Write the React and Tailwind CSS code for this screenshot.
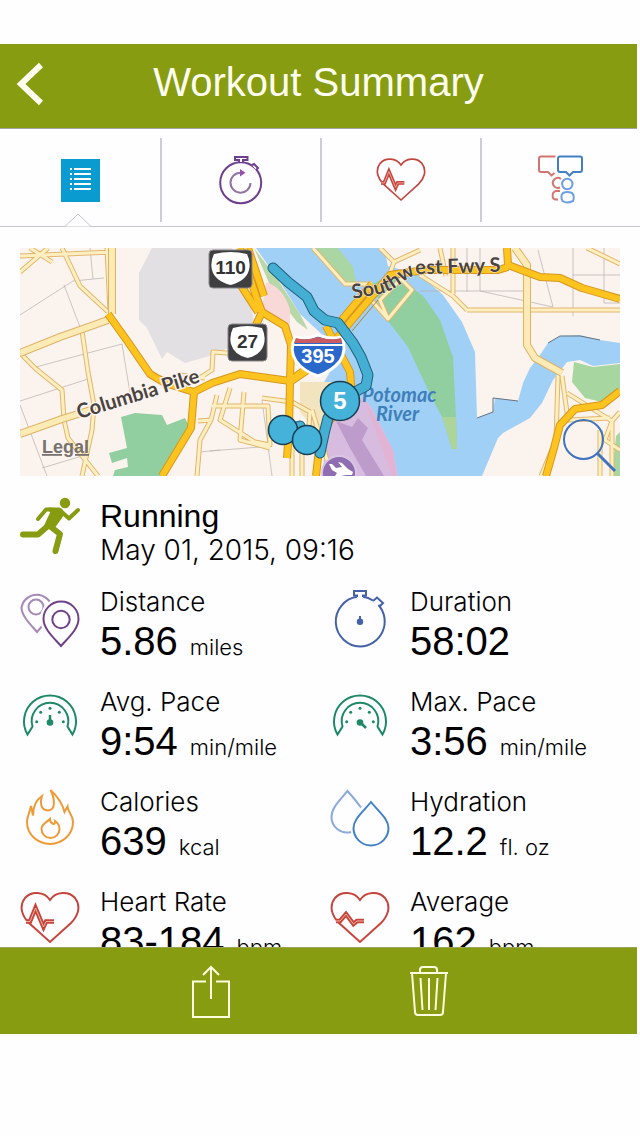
import React from "react";

const roads = {
  thin: [
    "M20 315 L73 281 L104 278 M64 285 L80 327 M90 248 L93 279",
    "M36 367 L88 353 L122 344 L130 393 M20 401 L88 379 M20 405 L47 476 M42 468 L82 456",
    "M210 451 L260 447 M262 400 L272 476 M200 462 V452 L220 450",
    "M467 248 V292 M480 248 V291 L553 307 L538 250 M573 248 V316 M573 275 H620 M604 248 V303 H620 M420 291 H530",
  ],
  minor: [
    "M20 256 L112 252 M20 272 L48 248 M30 248 L52 262",
    "M62 248 L80 286 L108 312 M107 248 L110 312",
    "M82 331 L88 372 L94 405 L92 430 L82 476 M20 353 L36 369 L62 390 L64 420 L68 438 L98 476",
    "M150 376 L190 384 L212 370 L213 352 L240 354 M180 375 L205 378",
    "M217 395 L211 420 L200 440 L197 476 M198 421 L212 420",
    "M212 406 H268 L270 445 L255 442 L220 420 L230 388 M244 392 L240 440 L270 448 M262 398 L292 402 L310 412 L308 440",
    "M313 248 L345 284 L372 284 M373 302 L388 319 L412 290 L400 278 M388 319 L380 300 L400 280",
    "M380 248 L394 262 L386 284 M394 262 L420 250 M420 275 L453 296 L467 310 M453 248 V294 M440 248 L446 276",
    "M292 445 V476 M302 450 V476 M312 410 L330 470",
    "M467 310 H620 M587 248 L620 264",
    "M562 376 L568 420 L610 418 M567 393 L612 421 L605 440 L620 450 M600 476 V430 M612 476 V421 L620 412",
    "M558 376 L556 440 L541 476",
  ],
  wide: [
    "M20 353 L60 337 L108 320 M20 434 L62 419 L94 409",
    "M112 248 L112 314",
    "M515 248 L527 265 V345 L535 358 L562 373",
  ],
  main: [
    "M108 314 L128 342 L150 374 L165 383 L194 392 L212 383 L240 374 L290 381 L310 366",
    "M194 392 L191 428 L162 476",
    "M507 248 L508 265 L540 277 L560 278 L582 288 L620 299",
    "M508 267 L498 270 H425 L390 275 L352 320 L315 365 L290 382",
    "M372 284 L340 322 M240 284 L258 312",
    "M240 248 L256 296 L262 312 L285 326 L291 345 L290 382 L289 430 L287 458",
    "M248 248 L264 296 M262 312 L256 325",
    "M326 326 L350 372 L352 395 L330 420 L320 440 L316 476",
    "M620 391 L602 405 L575 409 L560 425 L554 448 L546 476",
  ],
};

const RoadLayer = ({ paths, casing, fill, width }) => (
  <g fill="none" strokeLinejoin="round">
    <path d={paths.join(" ")} stroke={casing} strokeWidth={width + 2} />
    <path d={paths.join(" ")} stroke={fill} strokeWidth={width} />
  </g>
);

const StateShield = ({ x, y, w, h, label }) => (
  <g>
    <rect x={x} y={y} width={w} height={h} rx="4" fill="#3f3e41" stroke="#88878a" />
    <path
      d={`M${x + 5} ${y + 4} Q${x + w / 2} ${y} ${x + w - 5} ${y + 4} Q${x + w - 1} ${y + 12} ${x + w - 3} ${y + 20} Q${x + w - 6} ${y + 31} ${x + w / 2} ${y + h - 3} Q${x + 6} ${y + 31} ${x + 3} ${y + 20} Q${x + 1} ${y + 12} ${x + 5} ${y + 4} Z`}
      fill="#fff"
    />
    <text
      x={x + w / 2}
      y={y + 24}
      textAnchor="middle"
      fontSize="19"
      className="font-['Liberation_Sans',sans-serif] font-bold"
      fill="#333"
    >
      {label}
    </text>
  </g>
);

const route =
  "M273 268 L288 282 L307 297 L314 311 L325 320 L338 323 L353 343 L361 357 L368 375 L366 386 L353 393 M340 400 L328 418 L324 434 L320 453 M284 430 L300 426 L307 438";

const WorkoutMap = () => (
  <svg viewBox="20 248 600 228" className="block w-full" role="img" aria-label="Route map">
    <rect x="20" y="248" width="600" height="228" fill="#fbf3ee" />
    <path
      d="M152 248 L139 273 V320 L147 328 L162 359 L167 352 L185 363 L213 355 L235 345 L254 322 L250 300 L240 280 L232 248 Z"
      fill="#e2e0e2"
    />
    {/* Water */}
    <path
      d="M256 248 H384 L388 266 L420 275 L443 295 L462 322 L475 352 L477 418 L493 412 L495 398 L518 401 L523 383 L530 368 L540 355 L548 343 L560 336 L580 335 L600 340 L620 343 V363 L593 366 L580 360 L567 362 L553 380 L542 403 L530 418 L503 433 L498 438 L482 476 H397 L392 450 L363 400 L325 415 L316 396 L330 372 L328 340 L300 314 L282 285 Z"
      fill="#a0d0f6"
    />
    <path d="M477 418 L493 412 V398 L518 401 M548 343 L560 336 H580 L600 340" stroke="#65727e" fill="none" />
    {/* Parks */}
    <path
      d="M121 417 L135 413 L162 415 L167 425 L185 418 L191 430 L162 476 H113 L115 470 L128 467 L127 458 L112 463 L109 453 L127 448 Z"
      fill="#91cfa0"
    />
    <path d="M317 248 H338 L353 267 L357 286 L337 278 Z" fill="#a9d6a3" />
    <path
      d="M372 284 L397 273 L413 288 L424 297 L440 320 L453 357 L456 417 L457 449 L452 448 L442 417 L433 400 L420 373 L408 347 L388 321 Z"
      fill="#91cfa0"
    />
    <path d="M442 417 H456 L457 449 H452 Z" fill="#add59a" />
    <path d="M574 362 L593 367 L620 364 V392 L602 402 L585 398 L572 382 Z" fill="#a7d6a1" />
    <path d="M616 436 L620 432 V476 H612 Z" fill="#a7d6a1" />
    <path d="M254 248 L276 277 L300 314 L308 330 L297 322 L272 290 Z" fill="#b9d8aa" />
    <path d="M266 282 Q284 288 290 310 V332 L262 308 Z" fill="#f8d9d7" />
    <path d="M300 382 H332 L335 412 L320 436 L300 412 Z" fill="#f3e4c0" />
    {/* Airport grounds */}
    <path d="M328 425 L363 397 L372 408 L393 450 L398 476 H322 Z" fill="#d8bce0" />
    <path d="M363 397 L393 450 L396 476 H392 L381 445 Z" fill="#e3b3d4" />
    <path d="M336 421 L352 427 L358 418 L368 428 L362 440 L384 476 H366 L350 448 Z" fill="#bd9ccc" />

    <path d={roads.thin.join(" ")} fill="none" stroke="#b6b0ae" strokeWidth="0.7" />
    <RoadLayer paths={roads.minor} casing="#e2b76d" fill="#fdefc1" width={3} />
    <RoadLayer paths={roads.wide} casing="#dfb266" fill="#fdebb5" width={6} />
    <RoadLayer paths={roads.main} casing="#d7961f" fill="#fdc41f" width={6} />
    <path d="M378 300 L352 331" stroke="#a98735" fill="none" />

    {/* Place names */}
    <g className="font-[Lato,sans-serif] font-bold" fontSize="20" fill="#49433f" stroke="#fbf3ee" paintOrder="stroke">
      <text x="79" y="419" transform="rotate(-17 79 419)" strokeWidth="3">
        Columbia Pike
      </text>
      <path id="freeway-label" d="M353 299 L380 294 Q392 291 402 283 Q412 274 424 274 L520 271" fill="none" stroke="none" />
      <text strokeWidth="1">
        <textPath href="#freeway-label">Southwest Fwy S</textPath>
      </text>
    </g>
    <g className="font-[Lato,sans-serif] font-bold italic" fontSize="20" fill="#3f7fb9">
      <text x="362" y="402">Potomac</text>
      <text x="376" y="421">River</text>
    </g>

    {/* Airport badge */}
    <circle cx="339" cy="473" r="17" fill="#8f6db0" stroke="#d9c6e6" strokeWidth="2" />
    <path d="M329 464 L332 464 L336 468 L342 467 L338 462 L342 463 L348 469 L353 472 L352 475 L346 475 L341 476 H335 L337 473 L332 470 Z" fill="#fff" />

    <StateShield x={209} y={250} w={43} h={38} label="110" />
    <StateShield x={228} y={324} w={39} h={37} label="27" />

    {/* Interstate shield */}
    <path
      d="M295 337 Q306 340 318 335 Q331 340 342 337 Q347 350 340 361 Q332 371 318 376 Q303 371 296 361 Q289 350 295 337 Z"
      fill="#2b68cc"
      stroke="#fff"
      strokeWidth="3"
    />
    <path d="M296 338 Q306 341 318 337 Q331 341 341 338 L342 343 H294 Z" fill="#c95c62" />
    <path d="M293 345 H343" stroke="#fff" strokeWidth="2" />
    <text
      x="318"
      y="363"
      textAnchor="middle"
      fontSize="20"
      className="font-['Liberation_Sans',sans-serif] font-bold"
      fill="#fff"
    >
      395
    </text>

    {/* Route */}
    <g fill="none" strokeLinecap="round" strokeLinejoin="round">
      <path d={route} stroke="#1f5f7a" strokeWidth="11" />
      <path d={route} stroke="#45aed3" strokeWidth="9" />
    </g>
    <g fill="#45b2da" stroke="#173f52" strokeWidth="1.5">
      <circle cx="283" cy="430" r="14.5" />
      <circle cx="307" cy="440" r="14.5" />
      <circle cx="340" cy="401" r="19.5" />
    </g>
    <text
      x="340"
      y="409"
      textAnchor="middle"
      fontSize="24"
      className="font-['Liberation_Sans',sans-serif] font-bold"
      fill="#fff"
    >
      5
    </text>

    <a href="#legal">
      <text
        x="42"
        y="453"
        fontSize="18"
        className="font-['Liberation_Sans',sans-serif] font-bold underline"
        fill="#77716d"
      >
        Legal
      </text>
    </a>
    <g fill="none" stroke="#3f73c0">
      <circle cx="583.500" cy="439.500" r="19.500" strokeWidth="2" />
      <path d="M597 453 L615 471" strokeWidth="3" />
    </g>
  </svg>
);

const Icon = ({ children, color }) => (
  <svg viewBox="0 0 60 60" className="size-[60px] shrink-0" fill="none" stroke={color} strokeWidth="2" aria-hidden="true">
    {children}
  </svg>
);

const RunnerIcon = () => (
  <Icon color="#879c10">
    <circle cx="45" cy="7" r="5.2" fill="#879c10" stroke="none" />
    <g strokeLinecap="round" strokeLinejoin="round">
      <path d="M18 23 L26 13.500 H39 L49 22.500 L58 14" strokeWidth="4" />
      <path d="M29 13 L41 14 L43 18 L33 32 L26 29 L32 16 Z" fill="#879c10" strokeWidth="3" />
      <path d="M29 29 L18 38.500 H3" strokeWidth="6" />
      <path d="M31 31 L40 38 L35.500 55" strokeWidth="6" />
    </g>
  </Icon>
);

const PinsIcon = () => (
  <Icon color="#6f4288">
    <g stroke="#a58ab5">
      <path d="M17 44 C11 37 1.500 28 1.500 19.500 A15.500 15.500 0 0 1 32 19.500 C32 28 23 37 17 44 Z" />
      <circle cx="16" cy="19" r="7.500" />
    </g>
    <path
      d="M41 58 C34 50 23.500 41 23.500 31 A17.500 17.500 0 0 1 58.500 31 C58.500 41 48 50 41 58 Z"
      fill="#fefdff"
      stroke="#fefdff"
      strokeWidth="7"
    />
    <path d="M41 58 C34 50 23.500 41 23.500 31 A17.500 17.500 0 0 1 58.500 31 C58.500 41 48 50 41 58 Z" />
    <circle cx="41" cy="31.500" r="8.700" />
  </Icon>
);

const StopwatchIcon = () => (
  <Icon color="#4561a8">
    <path d="M27 8.800 A25 25 0 0 0 30 58.500 A25 25 0 0 0 48.500 17 M33 8.800 A25 25 0 0 1 43 12.500" />
    <path d="M27 9 V7.500 H24 V3 H36 V7.500 H33 V9 M43 13 L47 9.500 L53 15 L49.500 18.500" />
    <circle cx="30" cy="33.700" r="3.200" fill="#4561a8" stroke="none" />
    <path d="M30 33 V28" />
  </Icon>
);

const GaugeIcon = ({ needle }) => (
  <Icon color="#1d8a65">
    <path d="M7.500 46.500 A26 26 0 1 1 52.500 46.500 L47.500 38.500 A18.300 18.300 0 1 0 12.500 38.500 Z" />
    <g fill="#1d8a65" stroke="none">
      <circle cx="16.700" cy="33.700" r="1.500" />
      <circle cx="20.700" cy="24.300" r="1.500" />
      <circle cx="30" cy="20.300" r="1.500" />
      <circle cx="39.300" cy="24.300" r="1.500" />
      <circle cx="43.300" cy="33.700" r="1.500" />
      <circle cx="30" cy="34.500" r="3.300" />
    </g>
    <path d={needle} strokeWidth="2.500" />
  </Icon>
);

const FlameIcon = () => (
  <Icon color="#ee9b36">
    <path d="M30.500 2 C36 7 42 14 44.500 24 L47.500 18.500 C48 24 53 27 53 34 A23 22 0 0 1 7 34 C7 28 10 24 11 18 L13 27.500 C13 19 16 12 22 8 C20 14 20 22 28 22.500 C36 22 35 11 30.500 2 Z" />
    <path d="M30 31 C30 36 36 38 35 33 C38 35 39.500 38 39.500 41 A9 9 0 0 1 21.500 41 C21.500 36 26 35 30 31 Z" />
  </Icon>
);

const DropsIcon = () => (
  <Icon color="#4381c7">
    <path d="M31 19.500 C27 14 22 8 17.500 3 C9 13 1.500 20 1.500 29 A15.500 15.500 0 0 0 21 44" stroke="#8aaade" />
    <path d="M41 14 C49 24 58.500 31 58.500 40 A17.500 17.500 0 0 1 23.500 40 C23.500 31 33 24 41 14 Z" />
  </Icon>
);

const HeartShape = ({ pulse }) => (
  <>
    <path d="M30 12 C24 3 11 3 5 10 C-2 19 3 29 9 35 L30 54 L51 35 C57 29 62 19 55 10 C49 3 36 3 30 12 Z" />
    <path d={pulse} strokeWidth="4.500" />
    <path d={pulse} stroke="#f6b3a4" strokeWidth="1" />
  </>
);

const highPulse = "M6 33.500 H10 L15.500 20 L23.500 39 L26 33.500 H34";
const lowPulse = "M6 33 H10 L16 26 L23.500 36 L27 33 H34";

const HeartIcon = ({ pulse }) => (
  <Icon color="#c5453b">
    <HeartShape pulse={pulse} />
  </Icon>
);

const ListTabIcon = () => (
  <svg viewBox="0 0 39 43" className="h-[43px] w-[39px]" aria-hidden="true">
    <rect width="39" height="43" fill="#0a9bd0" />
    <path
      d="M9 10 H11 M9 15 H11 M9 20 H11 M9 25 H11 M9 30 H11 M13 10 H30 M13 15 H30 M13 20 H30 M13 25 H30 M13 30 H30"
      stroke="#fff"
      strokeWidth="2"
    />
  </svg>
);

const LapTabIcon = () => (
  <svg viewBox="216 154 50 54" className="h-[54px] w-[50px]" fill="none" stroke="#6d3f8c" strokeWidth="2" aria-hidden="true">
    <circle cx="240.700" cy="183.700" r="20.500" />
    <path d="M239 163 V161 H235 V158 H247.500 V161 H243 V163 M252 166 L254 165 L258 169 L256 171" fill="#fff" />
    <path d="M250.500 184 A10 10 0 1 1 240.500 173.700" stroke="#8f74a0" />
    <path d="M240 170 L245.500 173.700 L240 177.500 Z" fill="#9550ae" stroke="none" />
  </svg>
);

const HeartTabIcon = () => (
  <svg viewBox="0 0 60 60" className="size-[50px]" fill="none" stroke="#c2463d" strokeWidth="2" aria-hidden="true">
    <HeartShape pulse={highPulse} />
  </svg>
);

const SocialTabIcon = () => (
  <svg viewBox="536 154 50 54" className="h-[54px] w-[50px]" fill="none" strokeWidth="2" aria-hidden="true">
    <g stroke="#d3756e">
      <path d="M555.500 157.500 H541 Q539 157.500 539 159.500 V171 Q539 173 541 173 H548 L551.500 176.500 L554.500 174" />
      <path d="M561 180 A5 5 0 1 0 560 188.500 M560 192 H556 Q552 193 552.700 198 Q553 201 558 200.500" />
    </g>
    <path
      d="M560 157.500 H580 Q582 157.500 582 159.500 V171 Q582 173 580 173 H573 L569.500 176.500 L566 173 H560 Q558 173 558 171 V159.500 Q558 157.500 560 157.500 Z"
      stroke="#4380c2"
    />
    <g stroke="#6f9fe2">
      <circle cx="567.300" cy="185" r="5.200" />
      <path d="M563 194 Q567 192 572 194 Q575 197 573 202 Q567 205 562.500 202 Q560 197 563 194 Z" />
    </g>
  </svg>
);

const tabs = [
  { label: "Summary", icon: <ListTabIcon /> },
  { label: "Laps", icon: <LapTabIcon /> },
  { label: "Heart rate", icon: <HeartTabIcon /> },
  { label: "Social", icon: <SocialTabIcon /> },
];

const stats = [
  { label: "Distance", value: "5.86", unit: "miles", icon: <PinsIcon /> },
  { label: "Duration", value: "58:02", unit: "", icon: <StopwatchIcon /> },
  { label: "Avg. Pace", value: "9:54", unit: "min/mile", icon: <GaugeIcon needle="M30 34 V27" /> },
  { label: "Max. Pace", value: "3:56", unit: "min/mile", icon: <GaugeIcon needle="M30 34 L36 40" /> },
  { label: "Calories", value: "639", unit: "kcal", icon: <FlameIcon /> },
  { label: "Hydration", value: "12.2", unit: "fl. oz", icon: <DropsIcon /> },
  { label: "Heart Rate", value: "83-184", unit: "bpm", icon: <HeartIcon pulse={highPulse} /> },
  { label: "Average", value: "162", unit: "bpm", icon: <HeartIcon pulse={lowPulse} /> },
];

const App = () => {
  return (
    <div className="flex h-screen flex-col bg-[#fefdff] pt-11 pb-[102px] font-[Inter,'Liberation_Sans',sans-serif] text-black">
      {/* Header */}
      <header className="relative mr-[3px] flex h-[85px] shrink-0 items-center justify-center border-b border-[#a5a5a0] bg-[#879c10] pb-2">
        <button type="button" aria-label="Back" className="absolute left-4 top-[18px]">
          <svg viewBox="0 0 28 44" className="h-11 w-7" fill="none" stroke="#fffff0" strokeWidth="6" aria-hidden="true">
            <path d="M25 3 L5 22 L25 41" />
          </svg>
        </button>
        <h1 className="font-['Liberation_Sans',sans-serif] text-[40px] text-[#fffff0]">Workout Summary</h1>
      </header>

      {/* Tabs */}
      <nav className="relative grid h-[98px] shrink-0 grid-cols-4 border-b border-[#c6c3cb] pt-[9px] pb-1">
        {tabs.map((tab, index) => (
          <button
            key={tab.label}
            type="button"
            aria-label={tab.label}
            className={`flex items-center justify-center ${index > 0 ? "border-l-2 border-[#cfccd4]" : ""}`}
          >
            {tab.icon}
          </button>
        ))}
        <svg viewBox="0 0 28 14" className="absolute -bottom-px left-16 h-3.5 w-7" aria-hidden="true">
          <path d="M1 13.500 L14 1 L27 13.500" fill="#fefdff" stroke="#c6c3cb" />
        </svg>
      </nav>

      {/* Workout details */}
      <main className="min-h-0 flex-1 overflow-y-auto px-5 pt-[21px] [scrollbar-width:none]">
        <WorkoutMap />

        <section className="mt-5 flex h-[92px] gap-5">
          <RunnerIcon />
          <div className="pt-0.5">
            <h2 className="font-['Liberation_Sans',sans-serif] text-[32px] leading-9">Running</h2>
            <p className="text-[28px] leading-8 font-light">May 01, 2015, 09:16</p>
          </div>
        </section>

        <dl className="grid grid-cols-2 gap-x-5">
          {stats.map((stat) => (
            <div key={stat.label} className="flex h-[100px] gap-5">
              {stat.icon}
              <div className="whitespace-nowrap">
                <dt className="text-[26px] leading-7 font-light">{stat.label}</dt>
                <dd className="flex items-baseline gap-3">
                  <span className="font-['Liberation_Sans',sans-serif] text-[40px] leading-[50px]">{stat.value}</span>
                  {stat.unit && <span className="text-[22px] font-light">{stat.unit}</span>}
                </dd>
              </div>
            </div>
          ))}
        </dl>
      </main>

      {/* Toolbar */}
      <footer className="mr-[3px] flex h-[87px] shrink-0 items-center justify-center gap-[178px] border-t border-[#9aa55a] bg-[#879c10] pl-[3px]">
        <button type="button" aria-label="Share">
          <svg viewBox="0 0 40 54" className="h-[54px] w-10" fill="none" stroke="#fdfde0" strokeWidth="2" aria-hidden="true">
            <path d="M15 17.500 H2 V53 H38 V17.500 H25 M20 35 V3 M12 11 L20 3 L28 11" />
          </svg>
        </button>
        <button type="button" aria-label="Delete">
          <svg viewBox="0 0 40 54" className="h-[54px] w-10" fill="none" stroke="#fdfde0" strokeWidth="2" aria-hidden="true">
            <path d="M1 9 H39 M11 9 V6 Q11 3 14 3 H25 Q28 3 28 6 V9" />
            <path d="M3 9 L6 48 Q6 51 9 51 H31 Q34 51 34 48 L37 9 M11.500 14 L13.500 46 M20 14 V46 M28.500 14 L26.500 46" />
          </svg>
        </button>
      </footer>
    </div>
  );
};

export default App;
